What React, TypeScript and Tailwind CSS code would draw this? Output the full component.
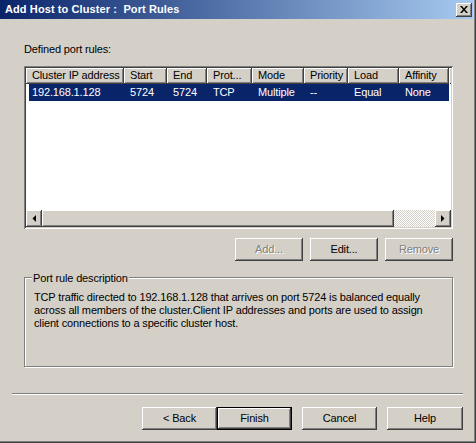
import React from "react";

const raised =
  "shadow-[inset_-1px_-1px_#404040,inset_1px_1px_#ffffff,inset_-2px_-2px_#808080,inset_2px_2px_#d4d0c8]";

const columns = [
  { label: "Cluster IP address", w: 98, value: "192.168.1.128" },
  { label: "Start", w: 43, value: "5724" },
  { label: "End", w: 40, value: "5724" },
  { label: "Prot...", w: 45, value: "TCP" },
  { label: "Mode", w: 52, value: "Multiple" },
  { label: "Priority", w: 44, value: "--" },
  { label: "Load", w: 51, value: "Equal" },
  { label: "Affinity", w: 50, value: "None" },
];

function Button({
  label,
  disabled,
  isDefault,
  className = "",
}: {
  label: string;
  disabled?: boolean;
  isDefault?: boolean;
  className?: string;
}) {
  return (
    <button
      className={`flex items-center justify-center h-[23px] bg-[#d4d0c8] text-[11px] leading-[13px] ${
        isDefault ? "border border-black" : ""
      } ${className}`}
    >
      <span
        className={`flex items-center justify-center w-full h-full ${raised} ${
          disabled ? "text-[#808080] [text-shadow:1px_1px_0_#ffffff]" : "text-black"
        }`}
      >
        {label}
      </span>
    </button>
  );
}

function ArrowButton({ dir }: { dir: "left" | "right" }) {
  return (
    <div className={`w-[16px] h-[17px] shrink-0 flex items-center justify-center bg-[#d4d0c8] ${raised}`}>
      <svg width="4" height="7" viewBox="0 0 4 7">
        {dir === "left" ? (
          <polygon points="4,0 4,7 0.5,3.5" fill="#000" />
        ) : (
          <polygon points="0,0 0,7 3.5,3.5" fill="#000" />
        )}
      </svg>
    </div>
  );
}

export default function App() {
  return (
    <div
      className="relative w-[476px] h-[443px] bg-[#d4d0c8] flex flex-col text-black tracking-[-0.15px] shadow-[inset_-1px_-1px_#404040,inset_-2px_-2px_#808080]"
      style={{ fontFamily: "'Liberation Sans', Arial, sans-serif" }}
    >
      {/* Title bar */}
      <div className="h-[19px] mr-[3px] flex items-center justify-between pl-[5px] pr-[1px] bg-[linear-gradient(to_right,#0a246a,#a6caf0)]">
        <span className="text-white font-bold text-[11px] leading-[13px] tracking-[0.1px]">
          Add Host to Cluster :&nbsp; Port Rules
        </span>
        <div className={`w-[16px] h-[14px] flex items-center justify-center bg-[#d4d0c8] ${raised}`}>
          <svg width="8" height="7" viewBox="0 0 8 7">
            <path d="M0 0h2l2 2.5L6 0h2L5 3.5 8 7H6L4 4.5 2 7H0l3-3.5z" fill="#000" />
          </svg>
        </div>
      </div>

      {/* Body */}
      <div className="flex flex-col px-[24px]">
        <div className="mt-[24px] text-[11px] leading-[13px]">Defined port rules:</div>

        {/* List view */}
        <div className="mt-[10px] w-[429px] h-[163px] p-[2px] bg-white shadow-[inset_1px_1px_#808080,inset_-1px_-1px_#ffffff,inset_2px_2px_#404040,inset_-2px_-2px_#d4d0c8] flex flex-col">
          <div className="flex h-[16px] shrink-0 bg-[#d4d0c8]">
            {columns.map((c) => (
              <div
                key={c.label}
                style={{ width: c.w }}
                className="shrink-0 h-full pl-[6px] text-[11px] leading-[15px] whitespace-nowrap overflow-hidden shadow-[inset_-1px_-1px_#404040,inset_1px_1px_#ffffff,inset_-2px_-2px_#808080]"
              >
                {c.label}
              </div>
            ))}
            <div className="flex-1 shadow-[inset_1px_1px_#ffffff,inset_0_-1px_#404040]" />
          </div>
          <div className="h-[126px] shrink-0">
            <div className="flex h-[17px] ml-[3px] w-[420px] bg-[#0a246a] text-white text-[11px] leading-[17px]">
              {columns.map((c, i) => (
                <div
                  key={c.label}
                  style={{ width: i === 0 ? c.w - 3 : c.w }}
                  className={`shrink-0 whitespace-nowrap overflow-hidden ${i === 0 ? "pl-[3px]" : "pl-[6px]"}`}
                >
                  {c.value}
                </div>
              ))}
            </div>
          </div>
          <div className="flex h-[17px] shrink-0 bg-[#d4d0c8]">
            <ArrowButton dir="left" />
            <div className={`w-[352px] shrink-0 h-full bg-[#d4d0c8] ${raised}`} />
            <div className="flex-1 h-full bg-[image:repeating-conic-gradient(#ffffff_0_25%,#d4d0c8_0_50%)] bg-[length:2px_2px]" />
            <ArrowButton dir="right" />
          </div>
        </div>

        {/* Add / Edit / Remove */}
        <div className="mt-[9px] w-[429px] flex justify-end gap-[7px]">
          <Button label="Add..." disabled className="w-[68px]" />
          <Button label="Edit..." className="w-[68px]" />
          <Button label="Remove" disabled className="w-[68px]" />
        </div>

        {/* Group box */}
        <div className="relative mt-[16px] w-[429px] h-[90px] border border-[#808080] shadow-[1px_1px_#ffffff,inset_1px_1px_#ffffff]">
          <span className="absolute left-[7px] top-[-6px] px-[1px] bg-[#d4d0c8] text-[11px] leading-[13px]">
            Port rule description
          </span>
          <p className="pt-[13px] pl-[9px] text-[11px] leading-[13px] whitespace-nowrap">
            TCP traffic directed to 192.168.1.128 that arrives on port 5724 is balanced equally
            <br />
            across all members of the cluster.Client IP addresses and ports are used to assign
            <br />
            client connections to a specific cluster host.
          </p>
        </div>
      </div>

      {/* Separator */}
      <div className="mt-[26px] ml-[12px] w-[451px] h-[2px] border-t border-[#808080] border-b border-b-white" />

      {/* Wizard buttons */}
      <div className="mt-[12px] flex pl-[142px]">
        <Button label="< Back" className="w-[75px]" />
        <Button label="Finish" isDefault className="w-[75px]" />
        <Button label="Cancel" className="w-[75px] ml-[10px]" />
        <Button label="Help" className="w-[76px] ml-[10px]" />
      </div>
    </div>
  );
}
